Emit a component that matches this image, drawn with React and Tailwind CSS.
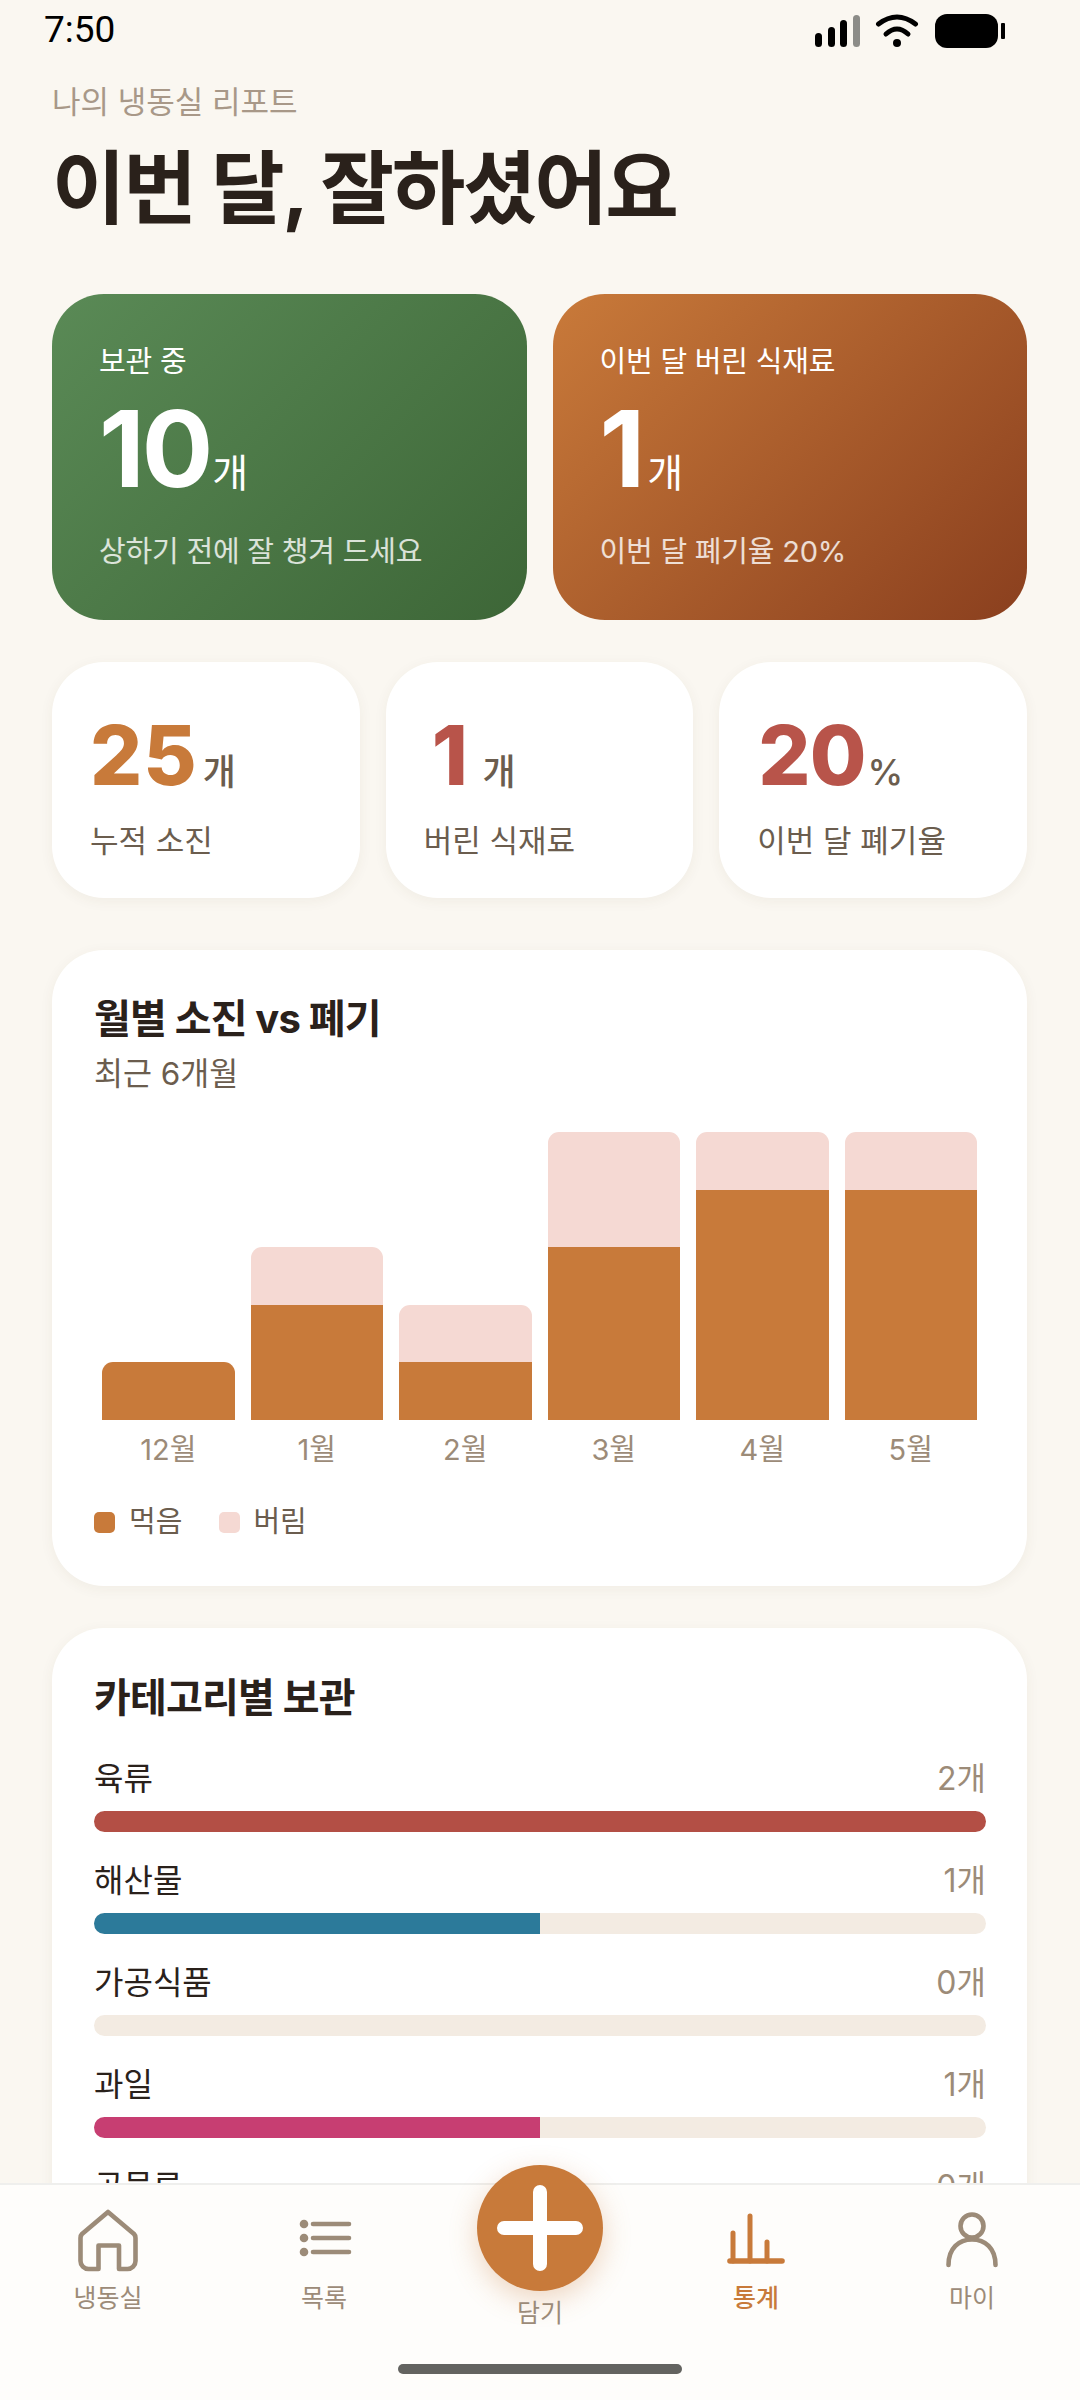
const font = { fontFamily: '"Inter", "Noto Sans CJK KR", sans-serif' };

const months = [
  { label: "12월", eaten: 1, wasted: 0 },
  { label: "1월", eaten: 2, wasted: 1 },
  { label: "2월", eaten: 1, wasted: 1 },
  { label: "3월", eaten: 3, wasted: 2 },
  { label: "4월", eaten: 4, wasted: 1 },
  { label: "5월", eaten: 4, wasted: 1 },
];

const categories = [
  { name: "육류", count: 2, pct: 100, color: "bg-[#b34f45]" },
  { name: "해산물", count: 1, pct: 50, color: "bg-[#2c7a9a]" },
  { name: "가공식품", count: 0, pct: 0, color: "bg-[#b34f45]" },
  { name: "과일", count: 1, pct: 50, color: "bg-[#c73e72]" },
  { name: "곡물류", count: 0, pct: 0, color: "bg-[#b34f45]" },
];

function StatusBar() {
  return (
    <div className="flex h-[58px] items-center justify-between pl-[44px] pr-[75px]">
      <span className="text-[37px] leading-none text-black" style={{ fontFamily: "Roboto, sans-serif" }}>7:50</span>
      <svg className="mt-[4px]" width="190" height="36" viewBox="0 0 190 36">
        <rect x="0" y="20" width="7" height="14" rx="3.5" fill="#000" />
        <rect x="13" y="14" width="7" height="20" rx="3.5" fill="#000" />
        <rect x="25" y="7" width="7" height="27" rx="3.5" fill="#000" />
        <rect x="38" y="2" width="7" height="32" rx="3.5" fill="#8c8c88" />
        <path d="M63.5 11 Q82 -3 100.5 11" fill="none" stroke="#000" strokeWidth="5" strokeLinecap="round" />
        <path d="M71 21 Q82 11 93 21" fill="none" stroke="#000" strokeWidth="5" strokeLinecap="round" />
        <circle cx="82" cy="30" r="4" fill="#000" />
        <rect x="120" y="1" width="63" height="34" rx="12" fill="#000" />
        <rect x="186" y="10" width="4" height="16" rx="1" fill="#000" />
      </svg>
    </div>
  );
}

function HeroCard({ label, value, sub, gradient, unitGap = "ml-[2px]" }) {
  return (
    <div className={`h-[326px] flex-1 rounded-[52px] pl-[47px] pt-[46px] text-white ${gradient}`}>
      <div className="text-[29px] leading-[44px] tracking-[-0.2px]">{label}</div>
      <div className="mt-[10px] flex items-baseline leading-none">
        <span className="text-[106px] font-bold leading-[110px] tracking-[-3px]">{value}</span>
        <span className={`text-[39px] ${unitGap}`}>개</span>
      </div>
      <div className="mt-[28px] text-[29px] leading-[40px] tracking-[-0.2px] text-white/80">{sub}</div>
    </div>
  );
}

function MiniCard({ value, unit, label, color, numClass = "tracking-[1px]" }) {
  return (
    <div className="h-[236px] flex-1 rounded-[52px] bg-white pl-[38px] pt-[55px] shadow-[0_3px_14px_rgba(90,70,40,0.06)]">
      <div className="flex h-[78px] items-baseline justify-start leading-none">
        <span className={`text-[82px] font-extrabold leading-[78px] ${color} ${numClass}`}>{value}</span>
        <span className="ml-[5px] text-[36px] font-medium text-[#6b5d4e]">{unit}</span>
      </div>
      <div className="mt-[24px] text-[31px] leading-[44px] text-[#6b5d4e]">{label}</div>
    </div>
  );
}

function Chart() {
  return (
    <div className="mt-[37px] flex gap-[16px] px-[8px]">
      {months.map((m) => (
        <div key={m.label} className="flex-1">
          <div className="flex h-[288px] flex-col justify-end overflow-hidden">
            <div className="overflow-hidden rounded-t-[11px]">
              <div className="bg-[#f5d9d3]" style={{ height: m.wasted * 57.6 }} />
              <div className="bg-[#c87a3a]" style={{ height: m.eaten * 57.6 }} />
            </div>
          </div>
          <div className="mt-[12px] text-center text-[29px] leading-[36px] text-[#9c8b78]">{m.label}</div>
        </div>
      ))}
    </div>
  );
}

function Legend() {
  return (
    <div className="mt-[34px] flex items-center text-[29px] leading-[40px] text-[#6b5d4e]">
      <span className="mr-[14px] h-[21px] w-[21px] rounded-[5px] bg-[#c87a3a]" />
      <span className="mr-[37px]">먹음</span>
      <span className="mr-[13px] h-[21px] w-[21px] rounded-[5px] bg-[#f5d9d3]" />
      <span>버림</span>
    </div>
  );
}

function CategoryRow({ name, count, pct, color }) {
  return (
    <div className="mb-[27px]">
      <div className="flex h-[44px] items-center justify-between">
        <span className="text-[32px] text-[#2a211b]">{name}</span>
        <span className="text-[32px] text-[#9c8b78]">
          <span className="inline-block w-[21px] text-right">{count}</span>개
        </span>
      </div>
      <div className="mt-[10px] h-[21px] overflow-hidden rounded-full bg-[#f3ebe2]">
        <div className={`h-full ${color}`} style={{ width: `${pct}%` }} />
      </div>
    </div>
  );
}

function NavIcon({ children, color }) {
  return (
    <svg width="74" height="74" viewBox="0 0 74 74" fill="none" stroke={color} strokeWidth="4.6" strokeLinecap="round" strokeLinejoin="round">
      {children}
    </svg>
  );
}

function NavItem({ label, active, children }) {
  const color = active ? "#c87a3a" : "#9c8b78";
  return (
    <div className="flex w-[216px] flex-col items-center pt-[19px]">
      <NavIcon color={color}>{children}</NavIcon>
      <span className={`mt-[2px] text-[25px] leading-[36px] ${active ? "font-medium text-[#c87a3a]" : "text-[#9c8b78]"}`}>{label}</span>
    </div>
  );
}

function BottomNav() {
  return (
    <div className="absolute inset-x-0 bottom-0 h-[217px] border-t-2 border-[#efefed] bg-[#fefdfb]">
      <div className="flex">
        <NavItem label="냉동실">
          <path d="M37 8 L11 30 Q9.5 31.5 9.5 34 V57 a8 8 0 0 0 8 8 H27.5 V41.5 H48 V65 H56.5 a8 8 0 0 0 8 -8 V34 Q64.5 31.5 63 30 Z" />
        </NavItem>
        <NavItem label="목록">
          <path d="M26 20 H62 M26 34 H62 M26 48 H62" />
          <path d="M17 20 h.01 M17 34 h.01 M17 48 h.01" strokeWidth="8.6" />
        </NavItem>
        <div className="flex w-[216px] flex-col items-center">
          <div className="-mt-[20px] flex h-[126px] w-[126px] items-center justify-center rounded-full bg-[#c87a3a] shadow-[0_8px_28px_rgba(200,122,58,0.3)]">
            <svg width="90" height="90" viewBox="0 0 90 90" fill="none" stroke="#fff" strokeWidth="14" strokeLinecap="round">
              <path d="M45 9 V81 M9 45 H81" />
            </svg>
          </div>
          <span className="mt-[4px] text-[25px] leading-[36px] text-[#9c8b78]">담기</span>
        </div>
        <NavItem label="통계" active>
          <path d="M11 57 H63" strokeWidth="5.6" />
          <path d="M14 57 V29 M31 57 V12 M48 57 V38" strokeWidth="5" />
        </NavItem>
        <NavItem label="마이">
          <circle cx="37" cy="22" r="11.5" />
          <path d="M13.5 61 C13.5 44 24 35.5 37 35.5 C50 35.5 60.5 44 60.5 61" />
        </NavItem>
      </div>
      <div className="absolute bottom-[26px] left-[398px] h-[10px] w-[284px] rounded-full bg-[#636360]" />
    </div>
  );
}

export default function App() {
  return (
    <div className="relative h-[2400px] w-[1080px] overflow-hidden bg-[#faf7f1]" style={font}>
      <StatusBar />
      <div className="pl-[52px] pr-[53px]">
        <div className="mt-[22px] text-[31px] leading-[44px] text-[#a89888]">나의 냉동실 리포트</div>
        <h1 className="mt-[14px] text-[80px] font-bold leading-[100px] tracking-[-2.4px] text-[#2a211b]">이번 달, 잘하셨어요</h1>

        <div className="mt-[56px] flex gap-[26px]">
          <HeroCard label="보관 중" value="10" sub="상하기 전에 잘 챙겨 드세요" gradient="bg-[linear-gradient(135deg,#5a8a56,#3d6637)]" />
          <HeroCard label="이번 달 버린 식재료" value="1" sub="이번 달 폐기율 20%" gradient="bg-[linear-gradient(135deg,#c97a3a,#8a3f1e)]" unitGap="ml-[5px]" />
        </div>

        <div className="mt-[42px] flex gap-[26px]">
          <MiniCard value="25" unit="개" label="누적 소진" color="text-[#c87a3a]" />
          <MiniCard value="1" unit="개" label="버린 식재료" color="text-[#b8544a]" numClass="px-[8px] tracking-[1.5px]" />
          <MiniCard value="20" unit="%" label="이번 달 폐기율" color="text-[#b8544a]" numClass="pl-[1px] -mr-[3px] tracking-[-1px]" />
        </div>

        <div className="mt-[52px] h-[636px] rounded-[52px] bg-white px-[42px] pt-[43px] shadow-[0_3px_14px_rgba(90,70,40,0.06)]">
          <div className="text-[40px] font-bold leading-[52px] tracking-[-0.8px] text-[#2a211b]">월별 소진 vs 폐기</div>
          <div className="mt-[8px] text-[31.5px] leading-[42px] text-[#6b5d4e]">최근 6개월</div>
          <Chart />
          <Legend />
        </div>

        <div className="mt-[42px] rounded-[52px] bg-white pl-[42px] pr-[41px] pt-[44px] shadow-[0_3px_14px_rgba(90,70,40,0.06)]">
          <div className="mb-[33px] text-[40px] font-bold leading-[52px] tracking-[-0.8px] text-[#2a211b]">카테고리별 보관</div>
          {categories.map((c) => (
            <CategoryRow key={c.name} {...c} />
          ))}
        </div>
      </div>
      <BottomNav />
    </div>
  );
}
